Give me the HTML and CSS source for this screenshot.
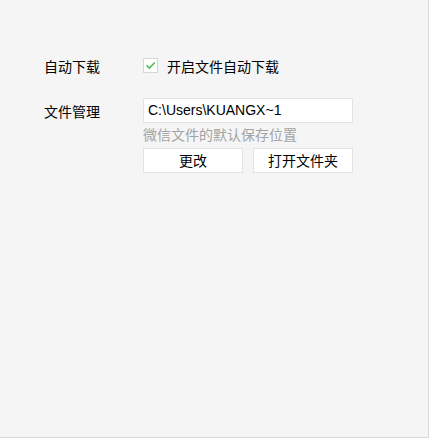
FILE: index.html
```html
<!DOCTYPE html>
<html lang="zh">
<head>
<meta charset="utf-8">
<link rel="stylesheet" href="styles.css">
</head>
<body>
<div class="window">
  <div class="panel">
    <div class="row row-download">
      <div class="label">自动下载</div>
      <label class="check">
        <span class="box">
          <svg width="13" height="13" viewBox="0 0 13 13"><path d="M2.5 6.3 L5.3 9.1 L10.8 3.4" fill="none" stroke="#4fba4f" stroke-width="1.5"/></svg>
        </span>
        <span class="check-text">开启文件自动下载</span>
      </label>
    </div>
    <div class="row row-files">
      <div class="label label-files">文件管理</div>
      <div class="files">
        <div class="path">C:\Users\KUANGX~1</div>
        <div class="hint">微信文件的默认保存位置</div>
        <div class="buttons">
          <button class="btn">更改</button>
          <button class="btn">打开文件夹</button>
        </div>
      </div>
    </div>
  </div>
</div>
</body>
</html>
```
FILE: styles.css
```css
html, body {
  margin: 0;
  padding: 0;
  background: #ffffff;
}
body {
  font-family: "Noto Sans CJK SC", "Noto Sans", sans-serif;
  font-size: 14px;
  color: #000;
}
.window {
  width: 429px;
  height: 438px;
  background: #f5f5f5;
  border-right: 1px solid #d9d9d9;
  border-bottom: 1px solid #d9d9d9;
  box-sizing: border-box;
}
.panel {
  padding: 54px 0 0 44px;
}
.row {
  display: flex;
}
.row-download {
  align-items: center;
  height: 24px;
}
.label {
  width: 99px;
  flex: none;
  line-height: 20px;
}
.check {
  display: flex;
  align-items: center;
}
.box {
  width: 13px;
  height: 13px;
  border: 1px solid #d6d6d6;
  background: #fff;
  display: flex;
  align-items: center;
  justify-content: center;
  margin-right: 9px;
  margin-top: -1px;
}
.box svg {
  display: block;
}
.check-text {
  line-height: 20px;
}
.row-files {
  margin-top: 20px;
  align-items: flex-start;
}
.label-files {
  line-height: 25px;
  padding-top: 1px;
}
.files {
  display: flex;
  flex-direction: column;
}
.path {
  width: 210px;
  height: 25px;
  box-sizing: border-box;
  border: 1px solid #e3e3e3;
  background: #fff;
  font-family: "Liberation Sans", Arial, sans-serif;
  font-size: 14px;
  line-height: 23px;
  padding-left: 4px;
}
.hint {
  color: #a3a3a3;
  line-height: 20px;
  margin-top: 1px;
}
.buttons {
  display: flex;
  gap: 10px;
  margin-top: 4px;
}
.btn {
  width: 100px;
  height: 25px;
  box-sizing: border-box;
  border: 1px solid #e3e3e3;
  background: #fff;
  font-family: "Noto Sans CJK SC", sans-serif;
  font-size: 14px;
  color: #000;
  padding: 0;
  line-height: 23px;
}
```
